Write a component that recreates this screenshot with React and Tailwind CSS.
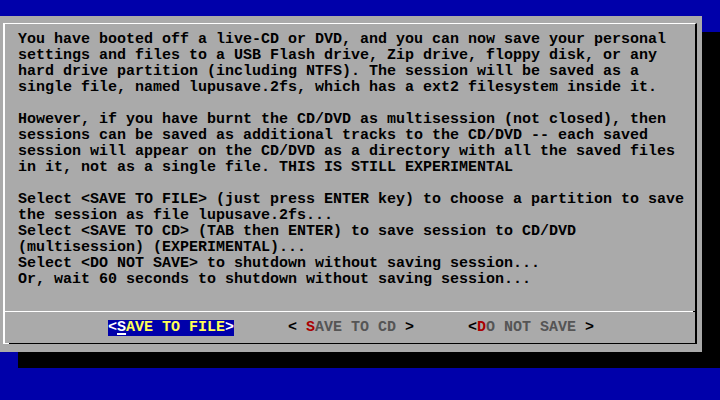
const LINES = [
  "You have booted off a live-CD or DVD, and you can now save your personal",
  "settings and files to a USB Flash drive, Zip drive, floppy disk, or any",
  "hard drive partition (including NTFS). The session will be saved as a",
  "single file, named lupusave.2fs, which has a ext2 filesystem inside it.",
  "",
  "However, if you have burnt the CD/DVD as multisession (not closed), then",
  "sessions can be saved as additional tracks to the CD/DVD -- each saved",
  "session will appear on the CD/DVD as a directory with all the saved files",
  "in it, not as a single file. THIS IS STILL EXPERIMENTAL",
  "",
  "Select <SAVE TO FILE> (just press ENTER key) to choose a partition to save",
  "the session as file lupusave.2fs...",
  "Select <SAVE TO CD> (TAB then ENTER) to save session to CD/DVD",
  "(multisession) (EXPERIMENTAL)...",
  "Select <DO NOT SAVE> to shutdown without saving session...",
  "Or, wait 60 seconds to shutdown without saving session...",
  "",
];

const App = () => {
  return (
    <div className="w-[720px] h-[400px] bg-[#0000aa] pt-4 overflow-hidden font-['Liberation_Mono',monospace] font-bold text-[15px] leading-4 text-black">
      {/* dialog */}
      <div className="w-[702px] h-[336px] bg-[#aaaaaa] pt-[7px] pl-[3px] shadow-[18px_16px_0_0_#000]">
        <div className="w-[694px] h-[321px] border-l-2 border-t border-r-2 border-l-white border-t-white border-r-black flex flex-col">
          {/* text */}
          <div className="pt-2 pl-[13px]">
            {LINES.map((l, i) => (
              <div key={i} className="h-4 whitespace-pre">
                {l}
              </div>
            ))}
          </div>

          {/* separator */}
          <div className="mt-[7px] flex h-px">
            <div className="flex-1 bg-white" />
            <div className="w-[2px] bg-black" />
          </div>

          {/* buttons */}
          <div className="mt-2 pl-[103px] flex gap-[54px] whitespace-pre">
            <div className="w-[126px] h-4 bg-[#0000aa] text-[#ffff55]">
              <span className="text-white">&lt;</span>
              <span className="text-white underline decoration-2 underline-offset-[2px]">S</span>
              AVE TO FILE
              <span className="text-white">&gt;</span>
            </div>
            <div className="w-[126px] h-4 text-[#555555]">
              <span className="text-black">&lt; </span>
              <span className="text-[#aa0000]">S</span>
              AVE TO CD
              <span className="text-black"> &gt;</span>
            </div>
            <div className="w-[126px] h-4 text-[#555555]">
              <span className="text-black">&lt;</span>
              <span className="text-[#aa0000]">D</span>
              O NOT SAVE
              <span className="text-black"> &gt;</span>
            </div>
          </div>

          {/* bottom edge */}
          <div className="mt-[7px] flex h-px">
            <div className="w-1 bg-white" />
            <div className="flex-1 bg-black" />
          </div>
        </div>
      </div>
    </div>
  );
};

export default App;
